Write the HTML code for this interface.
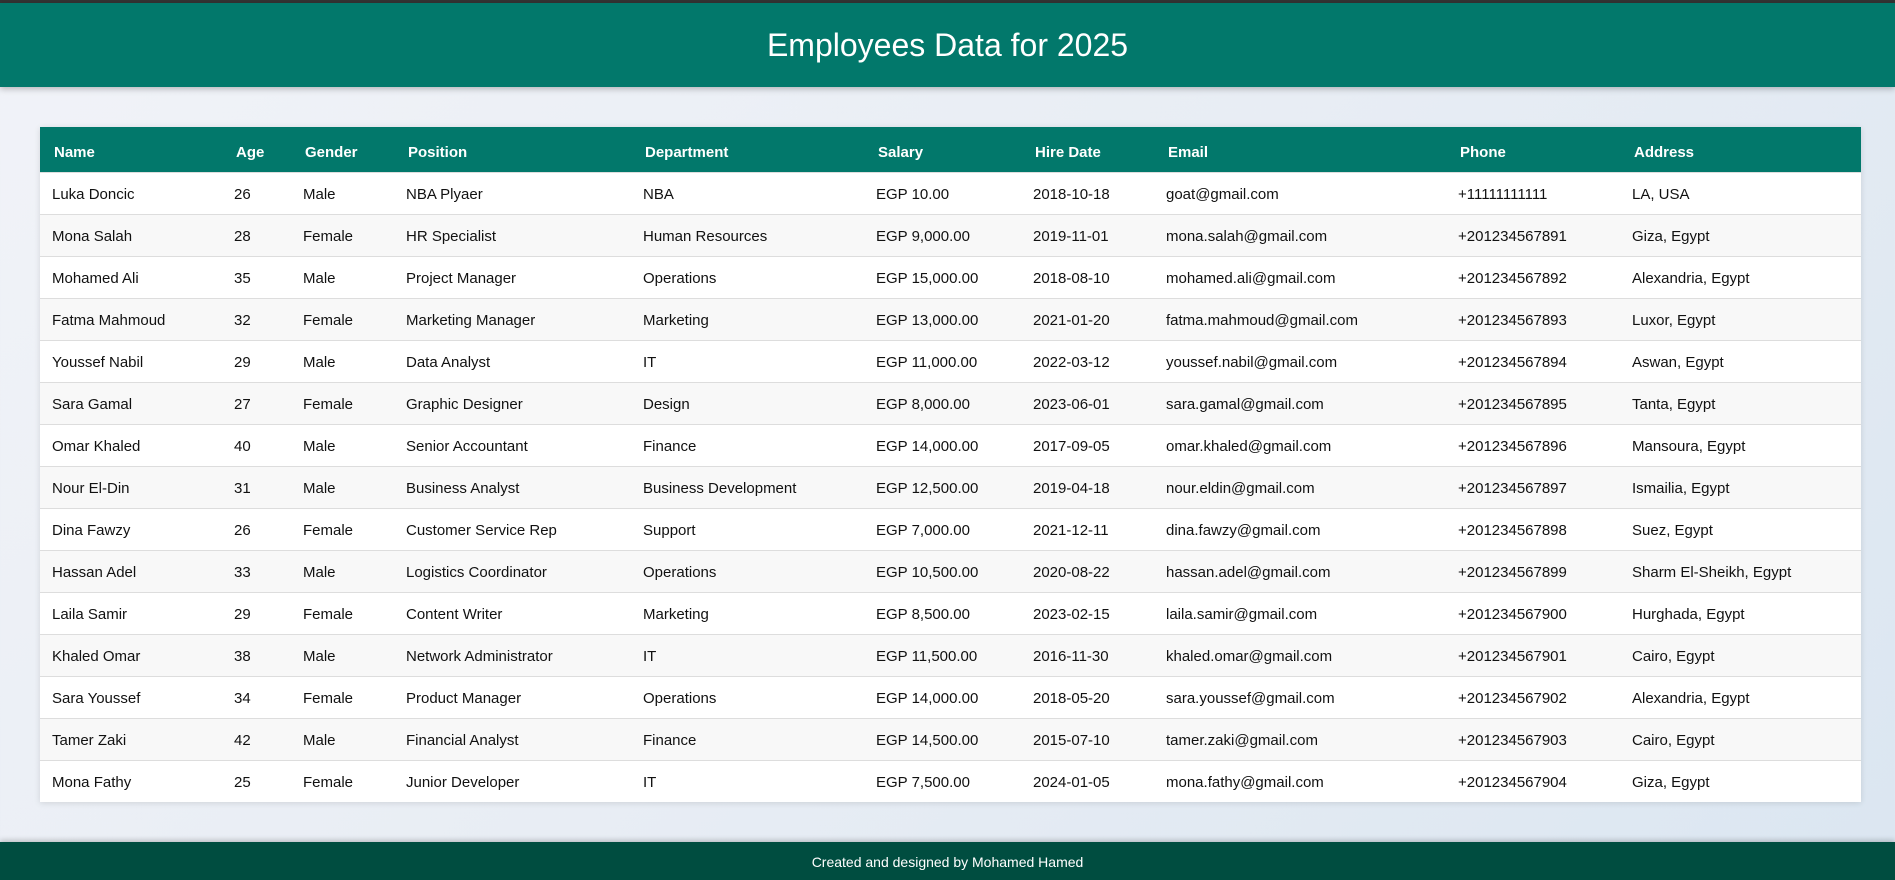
<!DOCTYPE html>
<html><head><meta charset="utf-8"><style>
*{margin:0;padding:0;box-sizing:border-box}
html,body{width:1895px;height:880px;overflow:hidden}
body{font-family:"Liberation Sans",sans-serif;background:linear-gradient(135deg,#f1f3f8 0%,#e8edf4 50%,#dbe6f1 100%);position:relative}
.top{height:3px;background:#333}
header{height:84px;background:#02786b;color:#fff;text-align:center;font-size:32px;line-height:84px;box-shadow:0 2px 6px rgba(0,0,0,.25)}
table{position:absolute;left:40px;top:127px;width:1821px;border-collapse:collapse;table-layout:fixed;background:#fff;box-shadow:0 1px 6px rgba(0,0,0,.12);font-size:15px;color:#111}
th{background:#02786b;color:#fff;text-align:left;font-weight:bold;height:45px;padding:6px 0 0 14px;font-size:15px}
td{height:42px;padding:2px 0 0 12px;border-top:1px solid #ddd;white-space:nowrap}
tbody tr:nth-child(even){background:#f8f8f8}
footer{position:absolute;left:0;top:842px;width:1895px;height:38px;background:#004d40;color:#fff;text-align:center;font-size:14px;line-height:40px;box-shadow:0 -2px 5px rgba(0,0,0,.2)}
</style></head><body>
<div class="top"></div>
<header>Employees Data for 2025</header>
<table>
<colgroup><col style="width:182px"><col style="width:69px"><col style="width:103px"><col style="width:237px"><col style="width:233px"><col style="width:157px"><col style="width:133px"><col style="width:292px"><col style="width:174px"><col></colgroup>
<thead><tr><th>Name</th><th>Age</th><th>Gender</th><th>Position</th><th>Department</th><th>Salary</th><th>Hire Date</th><th>Email</th><th>Phone</th><th>Address</th></tr></thead>
<tbody>
<tr><td>Luka Doncic</td><td>26</td><td>Male</td><td>NBA Plyaer</td><td>NBA</td><td>EGP 10.00</td><td>2018-10-18</td><td>goat@gmail.com</td><td>+11111111111</td><td>LA, USA</td></tr>
<tr><td>Mona Salah</td><td>28</td><td>Female</td><td>HR Specialist</td><td>Human Resources</td><td>EGP 9,000.00</td><td>2019-11-01</td><td>mona.salah@gmail.com</td><td>+201234567891</td><td>Giza, Egypt</td></tr>
<tr><td>Mohamed Ali</td><td>35</td><td>Male</td><td>Project Manager</td><td>Operations</td><td>EGP 15,000.00</td><td>2018-08-10</td><td>mohamed.ali@gmail.com</td><td>+201234567892</td><td>Alexandria, Egypt</td></tr>
<tr><td>Fatma Mahmoud</td><td>32</td><td>Female</td><td>Marketing Manager</td><td>Marketing</td><td>EGP 13,000.00</td><td>2021-01-20</td><td>fatma.mahmoud@gmail.com</td><td>+201234567893</td><td>Luxor, Egypt</td></tr>
<tr><td>Youssef Nabil</td><td>29</td><td>Male</td><td>Data Analyst</td><td>IT</td><td>EGP 11,000.00</td><td>2022-03-12</td><td>youssef.nabil@gmail.com</td><td>+201234567894</td><td>Aswan, Egypt</td></tr>
<tr><td>Sara Gamal</td><td>27</td><td>Female</td><td>Graphic Designer</td><td>Design</td><td>EGP 8,000.00</td><td>2023-06-01</td><td>sara.gamal@gmail.com</td><td>+201234567895</td><td>Tanta, Egypt</td></tr>
<tr><td>Omar Khaled</td><td>40</td><td>Male</td><td>Senior Accountant</td><td>Finance</td><td>EGP 14,000.00</td><td>2017-09-05</td><td>omar.khaled@gmail.com</td><td>+201234567896</td><td>Mansoura, Egypt</td></tr>
<tr><td>Nour El-Din</td><td>31</td><td>Male</td><td>Business Analyst</td><td>Business Development</td><td>EGP 12,500.00</td><td>2019-04-18</td><td>nour.eldin@gmail.com</td><td>+201234567897</td><td>Ismailia, Egypt</td></tr>
<tr><td>Dina Fawzy</td><td>26</td><td>Female</td><td>Customer Service Rep</td><td>Support</td><td>EGP 7,000.00</td><td>2021-12-11</td><td>dina.fawzy@gmail.com</td><td>+201234567898</td><td>Suez, Egypt</td></tr>
<tr><td>Hassan Adel</td><td>33</td><td>Male</td><td>Logistics Coordinator</td><td>Operations</td><td>EGP 10,500.00</td><td>2020-08-22</td><td>hassan.adel@gmail.com</td><td>+201234567899</td><td>Sharm El-Sheikh, Egypt</td></tr>
<tr><td>Laila Samir</td><td>29</td><td>Female</td><td>Content Writer</td><td>Marketing</td><td>EGP 8,500.00</td><td>2023-02-15</td><td>laila.samir@gmail.com</td><td>+201234567900</td><td>Hurghada, Egypt</td></tr>
<tr><td>Khaled Omar</td><td>38</td><td>Male</td><td>Network Administrator</td><td>IT</td><td>EGP 11,500.00</td><td>2016-11-30</td><td>khaled.omar@gmail.com</td><td>+201234567901</td><td>Cairo, Egypt</td></tr>
<tr><td>Sara Youssef</td><td>34</td><td>Female</td><td>Product Manager</td><td>Operations</td><td>EGP 14,000.00</td><td>2018-05-20</td><td>sara.youssef@gmail.com</td><td>+201234567902</td><td>Alexandria, Egypt</td></tr>
<tr><td>Tamer Zaki</td><td>42</td><td>Male</td><td>Financial Analyst</td><td>Finance</td><td>EGP 14,500.00</td><td>2015-07-10</td><td>tamer.zaki@gmail.com</td><td>+201234567903</td><td>Cairo, Egypt</td></tr>
<tr><td>Mona Fathy</td><td>25</td><td>Female</td><td>Junior Developer</td><td>IT</td><td>EGP 7,500.00</td><td>2024-01-05</td><td>mona.fathy@gmail.com</td><td>+201234567904</td><td>Giza, Egypt</td></tr>
</tbody></table>
<footer>Created and designed by Mohamed Hamed</footer>
</body></html>
